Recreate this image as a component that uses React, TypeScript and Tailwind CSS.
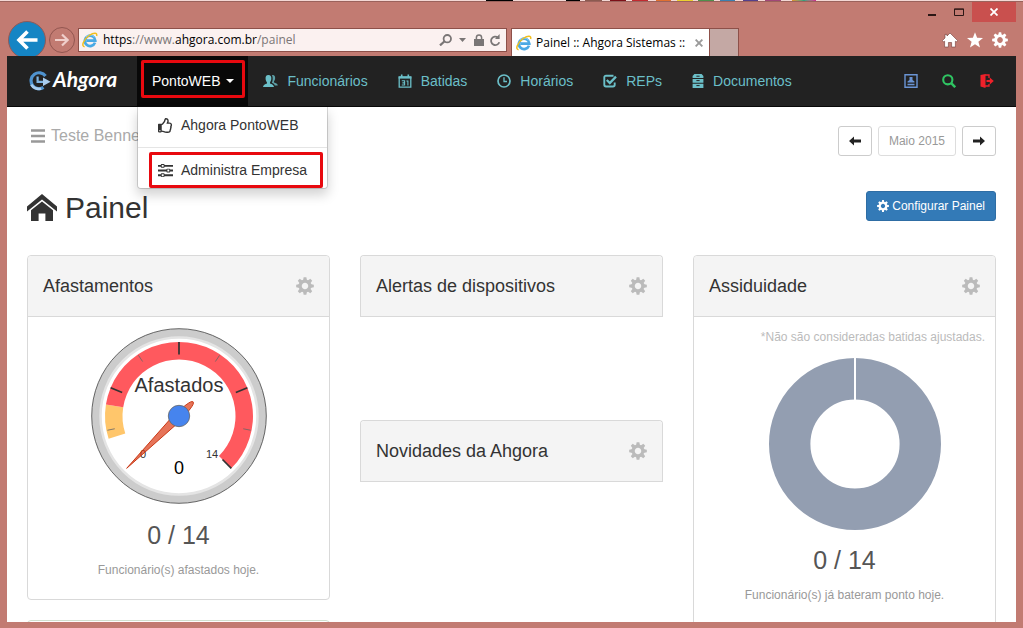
import React from 'react';
import { ImEqualizer } from 'react-icons/im';
import { FaRegThumbsUp } from 'react-icons/fa';

function Cog({ className }: { className: string }) {
  return (
    <svg viewBox="-10 -10 20 20" className={className} fill="currentColor" aria-hidden="true">
      {[0, 45, 90, 135, 180, 225, 270, 315].map((a) => (
        <path key={a} d="M-2.2 -6 L-1.5 -9.8 H1.5 L2.2 -6Z" transform={`rotate(${a})`} />
      ))}
      <circle r="5.4" fill="none" stroke="currentColor" strokeWidth="3.6" />
    </svg>
  );
}

function ExplorerLogo() {
  return (
    <svg viewBox="0 0 16 16" className="size-4 shrink-0" fill="none" aria-hidden="true">
      <path d="M13 10.6 A5.2 5.2 0 1 1 13.3 8.6 H4.5" stroke="#4aa9e4" strokeWidth="2.7" />
      <path d="M12.4 5 A5.4 5.4 0 0 0 4 5" stroke="#8fd3f7" strokeWidth=".9" />
      <path d="M2.6 14.8 C-1.2 14.4 1.6 7.4 7.2 3.5 C11.6 .5 15.6 .2 14.6 4" stroke="#f2bf1d" strokeWidth="1.5" />
    </svg>
  );
}

function AhgoraMark() {
  return (
    <svg viewBox="0 0 24 20" className="h-5 w-6" fill="none" aria-hidden="true">
      <path d="M18.5 5 A8 8 0 1 0 16.5 16.4" stroke="#4f93cf" strokeWidth="3.2" />
      <path d="M4.3 13.6 A8 8 0 0 0 14 17.4" stroke="#a9cdee" strokeWidth="2.6" />
      <path d="M10.6 5.5 V10.8 H17" stroke="#7fb4e2" strokeWidth="2.2" />
      <path d="M16 6.4 L23.6 10.8 L16 15Z" fill="#a9cdee" />
    </svg>
  );
}

function PeopleIcon() {
  return (
    <svg viewBox="0 0 15 14" className="h-[14px] w-[15px]" fill="currentColor" aria-hidden="true">
      <path d="M9 1.2 C11 .6 12.4 2 12.1 4.6 C12 6 11.4 6.8 11 7.5 V8.6 C12.8 9.3 14.6 9.6 14.8 11.6 H11.8 C11.4 9.9 10.2 9.3 8.8 8.7 C9.8 7 10.2 3.4 9 1.2Z" opacity=".8" />
      <path d="M5.4 1 C7.6 1 8.5 2.6 8.3 5 C8.2 6.6 7.4 7.6 7 8.4 V9.4 C9 10.3 10.8 10.6 11 13 H0 C.2 10.6 2 10.3 4 9.4 V8.4 C3.4 7.6 2.7 6.6 2.6 5 C2.4 2.6 3.2 1 5.4 1Z" />
    </svg>
  );
}

function CalendarIcon() {
  return (
    <svg viewBox="0 0 14 14" className="size-[14px]" fill="none" stroke="currentColor" aria-hidden="true">
      <path d="M1.2 3 H12.8 V13.2 H1.2Z" strokeWidth="1.3" />
      <path d="M.6 3.6 H13.4" strokeWidth="2" />
      <path d="M3.7 .4 V4 M10.3 .4 V4" strokeWidth="1.6" />
      <path d="M3.8 6.8 H6.6 V11 H3.8 M4.4 8.9 H6.6 M8.4 7 H9.9 V11.5" strokeWidth="1.1" />
    </svg>
  );
}

function ClockIcon() {
  return (
    <svg viewBox="0 0 14 14" className="size-[14px]" fill="none" stroke="currentColor" aria-hidden="true">
      <circle cx="7" cy="7" r="6" strokeWidth="1.7" />
      <path d="M7 3.2 V7.5 H10" strokeWidth="1.3" />
    </svg>
  );
}

function CheckIcon() {
  return (
    <svg viewBox="0 0 14 14" className="size-[14px]" fill="none" stroke="currentColor" aria-hidden="true">
      <path d="M10.5 1.7 H3 A1.7 1.7 0 0 0 1.3 3.4 V10.8 A1.7 1.7 0 0 0 3 12.5 H10 A1.7 1.7 0 0 0 11.7 10.8 V8.6" strokeWidth="1.9" />
      <path d="M3.8 6 L6.8 9 L13 2.6" strokeWidth="2.3" />
    </svg>
  );
}

function DrawerIcon() {
  return (
    <svg viewBox="0 0 12 14" className="h-[14px] w-3" fill="currentColor" aria-hidden="true">
      <path d="M2.4 0 H9.6 L11.4 2 V4 H.6 V2Z" />
      <path d="M.6 4.9 H11.4 V8.8 H.6Z M.6 9.8 H11.4 V14 H.6Z" />
      <path d="M4.4 2.2 H7.6 M4.4 6.6 H7.6 M4.4 11.6 H7.6" fill="none" stroke="#222" strokeWidth="1" />
    </svg>
  );
}

function ArrowIcon({ flip }: { flip?: boolean }) {
  return (
    <svg viewBox="0 0 12 10" className="h-[10px] w-3" fill="currentColor" aria-hidden="true">
      <path d={flip ? 'M12 5 L7 .4 V3.5 H0 V6.5 H7 V9.6Z' : 'M0 5 L5 .4 V3.5 H12 V6.5 H5 V9.6Z'} />
    </svg>
  );
}

const swatches = [
  ['w-[27px] bg-black', 'ml-[479px]'],
  ['w-[14px] bg-black', 'ml-[53px]'],
  ['w-[17px] bg-[#8b5a50]', 'ml-[5px]'],
  ['w-[16px] bg-[#7d1018]', 'ml-[8px]'],
  ['w-[16px] bg-[#c22a30]', 'ml-[6px]'],
  ['w-[15px] bg-[#e07030]', 'ml-[8px]'],
  ['w-[16px] bg-[#ecd030]', 'ml-[6px]'],
  ['w-[16px] bg-[#50904c]', 'ml-[5px]'],
  ['w-[15px] bg-[#3c80b0]', 'ml-[6px]'],
  ['w-[15px] bg-[#55408c]', 'ml-[8px]'],
  ['w-[16px] bg-[#a04878]', 'ml-[7px]'],
  ['w-[24px] bg-linear-to-r from-[#e09020] via-[#20a080] to-[#d01890]', 'ml-[11px]'],
];

function BrowserChrome() {
  return (
    <header className="flex shrink-0 flex-col font-['Open_Sans','Noto_Sans',sans-serif] text-xs">
      <div className="-mx-[7px] flex h-px overflow-hidden bg-[#f3d8d5] px-[7px]">
        {swatches.map(([look, gap]) => (
          <span key={gap + look} className={`h-px shrink-0 ${look} ${gap}`} />
        ))}
      </div>
      <div className="-mx-[7px] h-px bg-[#9b625c]" />
      <div className="flex h-5 justify-end text-[#2b1715]">
        <button aria-label="Minimizar" className="flex w-[27px] items-center justify-center">
          <svg viewBox="0 0 8 10" className="h-[10px] w-2"><path d="M0 8 H8" stroke="currentColor" strokeWidth="2" /></svg>
        </button>
        <button aria-label="Maximizar" className="flex w-[27px] items-center justify-center">
          <svg viewBox="0 0 10 8" className="h-2 w-[10px]"><path d="M.5 1 H9.5 V7.5 H.5Z M0 1.2 H10" fill="none" stroke="currentColor" /></svg>
        </button>
        <button aria-label="Fechar" className="flex w-[44px] items-center justify-center bg-[#c9504e] text-white">
          <svg viewBox="0 0 8 8" className="size-2"><path d="M.5 .5 L7.5 7.5 M7.5 .5 L.5 7.5" stroke="currentColor" strokeWidth="1.8" /></svg>
        </button>
      </div>
      <div className="flex h-[34px] items-center pt-[2px]">
        <button aria-label="Voltar" className="ml-px flex size-[38px] shrink-0 items-center justify-center rounded-full border border-[#8f5a58] bg-[#1585c4] text-white">
          <svg viewBox="0 0 22 20" className="h-5 w-[22px]" fill="none" stroke="currentColor" strokeWidth="3.6"><path d="M2.5 10 H21.5 M11.5 1.5 L3 10 L11.5 18.5" /></svg>
        </button>
        <button aria-label="Avançar" className="ml-[3px] flex size-[26px] shrink-0 items-center justify-center rounded-full border border-[#925650] text-[#f0cfcb]">
          <svg viewBox="0 0 14 14" className="size-[14px]" fill="none" stroke="currentColor" strokeWidth="2.2"><path d="M0 7 H12.5 M7 1.5 L12.6 7 L7 12.5" /></svg>
        </button>
        <div className="ml-[3px] flex h-6 w-[429px] items-center border border-[#8d5049] bg-[#fbf1f0] pl-[3px] text-[#7a7676]">
          <ExplorerLogo />
          <p className="ml-[5px] flex-1 whitespace-nowrap">
            <span className="text-black">https</span>://www.<span className="text-black">ahgora.com.br</span>/painel
          </p>
          <button aria-label="Pesquisar" className="mr-[7px]">
            <svg viewBox="0 0 13 12" className="h-3 w-[13px]" fill="none" stroke="currentColor"><circle cx="8.3" cy="4.7" r="3.7" strokeWidth="1.8" /><path d="M5.6 7.3 L1 11.4" strokeWidth="2.2" /></svg>
          </button>
          <button aria-label="Sugestões" className="mr-2">
            <svg viewBox="0 0 7 4" className="h-1 w-[7px]" fill="currentColor"><path d="M0 0 H7 L3.5 4Z" /></svg>
          </button>
          <svg viewBox="0 0 10 12" className="mr-[6px] h-3 w-[10px]" fill="currentColor" aria-hidden="true"><path d="M0 5 H10 V12 H0Z" /><path d="M2.4 5.5 V3.6 A2.6 2.6 0 0 1 7.6 3.6 V5.5" fill="none" stroke="currentColor" strokeWidth="1.5" /></svg>
          <button aria-label="Atualizar" className="mr-[5px]">
            <svg viewBox="0 0 11 12" className="h-3 w-[11px]" fill="none" stroke="currentColor" strokeWidth="1.8"><path d="M9.3 8.2 A4.2 4.2 0 1 1 8 3.6" /><path d="M9.6 0 V5 H5Z" fill="currentColor" stroke="none" /></svg>
          </button>
        </div>
        <div className="ml-1 flex h-7 w-[199px] items-center self-end border border-b-0 border-[#8d5049] bg-white pl-1 text-black">
          <ExplorerLogo />
          <span className="ml-1 flex-1 whitespace-nowrap">Painel :: Ahgora Sistemas ::</span>
          <button aria-label="Fechar guia" className="mr-[6px] text-[#9a9a9a]">
            <svg viewBox="0 0 8 8" className="size-2"><path d="M.6 .6 L7.4 7.4 M7.4 .6 L.6 7.4" stroke="currentColor" strokeWidth="1.9" /></svg>
          </button>
        </div>
        <button aria-label="Nova guia" className="h-7 w-[29px] self-end border border-b-0 border-l-0 border-[#8d5049] bg-[#c4a8a4]" />
        <div className="mr-2 ml-auto flex items-center gap-[9px] text-white">
          <button aria-label="Início">
            <svg viewBox="0 0 16 16" className="size-4" fill="currentColor"><path d="M8 1 L15.6 8.6 L14.3 10 L13.4 9.2 V15 H9.6 V10.5 H6.4 V15 H2.6 V9.2 L1.7 10 L.4 8.6 L3 6 V2.4 H5 V4Z" stroke="#6f3a35" strokeWidth=".6" /></svg>
          </button>
          <button aria-label="Favoritos">
            <svg viewBox="0 0 16 16" className="size-4" fill="currentColor"><path d="M8 .2 L10.1 5.7 L16 6 L11.4 9.7 L13 15.4 L8 12.2 L3 15.4 L4.6 9.7 L0 6 L5.9 5.7Z" /></svg>
          </button>
          <button aria-label="Ferramentas"><Cog className="size-4" /></button>
        </div>
      </div>
    </header>
  );
}

const links = [
  { label: 'Funcionários', icon: <PeopleIcon /> },
  { label: 'Batidas', icon: <CalendarIcon /> },
  { label: 'Horários', icon: <ClockIcon /> },
  { label: 'REPs', icon: <CheckIcon /> },
  { label: 'Documentos', icon: <DrawerIcon /> },
];

function Navbar() {
  return (
    <nav className="flex h-[51px] shrink-0 items-stretch border-b border-[#080808] bg-[#222] text-sm text-[#6bbfc8]">
      <a href="#inicio" className="flex w-[130px] shrink-0 items-center gap-[2px] pl-5 text-white">
        <AhgoraMark />
        <span className="pb-1 font-['Lato',sans-serif] text-[21px] font-bold italic">Ahgora</span>
      </a>
      <ul className="flex">
        <li className="relative bg-[#080808] pt-1 pr-[3px] pl-1">
          <button aria-expanded="true" className="flex h-[38px] items-center gap-[6px] rounded-xs border-3 border-[#e8090f] px-2 pt-1 text-white">
            PontoWEB
            <svg viewBox="0 0 8 4" className="h-1 w-2" fill="currentColor" aria-hidden="true"><path d="M0 0 H8 L4 4Z" /></svg>
          </button>
          <div className="absolute top-[51px] left-0 z-10 w-[191px] rounded-b border border-t-0 border-black/15 bg-white bg-clip-padding text-[#333] shadow-[0_6px_12px_rgba(0,0,0,0.175)]">
            <a href="#pontoweb" className="flex h-[41px] items-center gap-2 border-b border-[#e5e5e5] pb-1 pl-5">
              <FaRegThumbsUp className="size-[15px]" />
              Ahgora PontoWEB
            </a>
            <a href="#empresa" className="mt-1 mr-1 ml-[11px] flex h-9 items-center gap-2 rounded-xs border-3 border-[#e8090f] pl-[6px] whitespace-nowrap">
              <ImEqualizer className="size-[15px]" />
              Administra Empresa
            </a>
          </div>
        </li>
        {links.map((l) => (
          <li key={l.label} className="flex">
            <a href={`#${l.label}`} className="flex items-center gap-[9px] px-[15px]">
              {l.icon}
              {l.label}
            </a>
          </li>
        ))}
      </ul>
      <div className="mr-[22px] ml-auto flex items-center gap-6">
        <button aria-label="Perfil" className="text-[#6a94d4]">
          <svg viewBox="0 0 14 14" className="size-[14px]" fill="currentColor"><path d="M1 .8 H13 V13.2 H1Z" fill="none" stroke="currentColor" strokeWidth="1.4" /><path d="M5.5 3 H8.5 V6 L10.5 7.5 V8.5 H3.5 V7.5 L5.5 6Z M3.5 9.7 H10.5 V11.2 H3.5Z" /></svg>
        </button>
        <button aria-label="Buscar" className="text-[#2fc462]">
          <svg viewBox="0 0 14 14" className="size-[14px]" fill="none" stroke="currentColor"><circle cx="5.8" cy="5.8" r="4.6" strokeWidth="2.1" /><path d="M9.2 9.2 L13.2 13.2" strokeWidth="2.5" /></svg>
        </button>
        <button aria-label="Sair" className="text-[#f0212a]">
          <svg viewBox="0 0 14 14" className="size-[14px]" fill="currentColor"><path d="M.5 1 L5.5 0 V14 L.5 12.4Z" /><path d="M5 1 H9 V4 M9 10 V12 H5" fill="none" stroke="currentColor" strokeWidth="1.3" /><path d="M6.5 6 H9.8 V3.6 L13.8 7 L9.8 10.4 V8 H6.5Z" /></svg>
        </button>
      </div>
    </nav>
  );
}

function point(r: number, deg: number) {
  const a = (deg * Math.PI) / 180;
  return `${(r * Math.sin(a)).toFixed(2)} ${(-r * Math.cos(a)).toFixed(2)}`;
}

function band(from: number, to: number, outer: number, inner: number) {
  const large = to - from > 180 ? 1 : 0;
  return `M${point(outer, from)} A${outer} ${outer} 0 ${large} 1 ${point(outer, to)} L${point(inner, to)} A${inner} ${inner} 0 ${large} 0 ${point(inner, from)}Z`;
}

function Gauge() {
  return (
    <svg viewBox="-88 -88 176 176" className="size-44" role="img" aria-label="Afastados: 0 de 14">
      <circle r="87.3" fill="#ccc" stroke="#444" strokeWidth=".8" />
      <circle r="78.5" fill="#fff" stroke="#e4e4e4" strokeWidth="2.5" />
      <path d={band(-108, -81, 74, 56.5)} fill="#ffc66b" />
      <path d={band(-81, 135, 74, 56.5)} fill="#ff595e" />
      {[-67.5, 0, 67.5, 135].map((a) => (
        <path key={a} d={`M${point(74, a)} L${point(61.5, a)}`} stroke="#333" strokeWidth="1.7" />
      ))}
      {[-101.25, -33.75, 33.75, 101.25].map((a) => (
        <path key={a} d={`M${point(73, a)} L${point(65.5, a)}`} stroke="#666" strokeWidth=".8" />
      ))}
      <g fontFamily="Liberation Sans, sans-serif" textAnchor="middle" fill="#333">
        <text y="-24.5" fontSize="20">Afastados</text>
        <text x="-36" y="42" fontSize="11">0</text>
        <text x="33" y="42" fontSize="11">14</text>
        <text y="58" fontSize="18" fill="#000">0</text>
      </g>
      <g transform="rotate(-135)">
        <path d="M0 -74 L-4 -9 C-4 4 -3.2 14 -1.8 18 Q0 22 1.8 18 C3.2 14 4 4 4 -9Z" fill="#dc3912" fillOpacity=".7" stroke="#c63310" strokeWidth=".9" />
      </g>
      <circle r="10.7" fill="#4684ee" stroke="#666" strokeWidth=".8" />
    </svg>
  );
}

function Donut() {
  return (
    <svg viewBox="-86 -86 172 172" className="size-[172px]" role="img" aria-label="0 de 14 funcionários">
      <circle r="65.3" fill="none" stroke="#939eb1" strokeWidth="41.4" />
      <path d="M0 -86 V-44" stroke="#fff" strokeWidth="2" />
    </svg>
  );
}

function Card({ title, children }: { title: string; children?: React.ReactNode }) {
  return (
    <section className={children ? 'rounded border border-[#d9d9d9]' : 'rounded-t border border-b-0 border-[#d9d9d9]'}>
      <div className="flex h-[61px] items-center justify-between rounded-t border-b border-[#d9d9d9] bg-[#f4f4f4] px-[15px] text-[#333]">
        <h2 className="text-lg">{title}</h2>
        <button aria-label={`Configurar ${title}`} className="text-[#bbb]"><Cog className="size-[18px]" /></button>
      </div>
      {children}
    </section>
  );
}

function Count({ children }: { children: React.ReactNode }) {
  return (
    <div className="text-center">
      <p className="text-[25px] leading-[30px] text-[#555]">0 / 14</p>
      <p className="mt-[11px] text-xs leading-[18px] text-[#999]">{children}</p>
    </div>
  );
}

export default function App() {
  return (
    <div className="flex h-screen flex-col overflow-hidden bg-[#c27b72] px-[7px] pb-[6px] font-['Liberation_Sans',Arial,sans-serif]">
      <BrowserChrome />
      <div className="relative flex min-h-0 flex-1 flex-col overflow-hidden bg-white">
        <Navbar />
        <main className="shrink-0 px-5 pt-[19px]">
          <div className="flex h-[30px] items-center justify-between">
            <button className="flex items-center gap-[6px] pb-[10px] pl-1 text-base text-[#aaa]">
              <svg viewBox="0 0 14 14" className="size-[14px] text-[#999]" aria-hidden="true"><path d="M0 1.5 H14 M0 7 H14 M0 12.5 H14" stroke="currentColor" strokeWidth="2.4" /></svg>
              Teste Benne
            </button>
            <div className="flex gap-[6px] text-xs text-[#222]">
              <button aria-label="Mês anterior" className="flex h-[30px] w-[34px] items-center justify-center rounded-[3px] border border-[#ccc]"><ArrowIcon /></button>
              <button className="h-[30px] rounded-[3px] border border-[#ddd] px-[10px] text-[#999]">Maio 2015</button>
              <button aria-label="Próximo mês" className="flex h-[30px] w-[34px] items-center justify-center rounded-[3px] border border-[#ccc]"><ArrowIcon flip /></button>
            </div>
          </div>
          <div className="mt-[35px] flex h-[30px] items-center justify-between">
            <h1 className="flex items-center gap-2 pt-1 text-3xl text-[#333]">
              <svg viewBox="0 0 30 28" className="h-7 w-[30px]" fill="currentColor" aria-hidden="true">
                <path d="M15 0 L30 12.4 V17.4 L15 5.4 L0 17.4 V12.4Z" />
                <path d="M15 7.4 L26 16.2 V27 H18.4 V19.4 H11.6 V27 H4 V16.2Z" />
              </svg>
              Painel
            </h1>
            <button className="flex h-[30px] items-center gap-[3px] rounded-[3px] border border-[#2e6da4] bg-[#337ab7] px-[10px] text-xs text-white">
              <Cog className="size-3" />
              Configurar Painel
            </button>
          </div>
          <div className="mt-[34px] grid grid-cols-3 items-start gap-[30px]">
            <div className="flex flex-col gap-5">
              <Card title="Afastamentos">
                <div className="flex flex-col items-center gap-4 pt-[11px] pb-[20px]">
                  <Gauge />
                  <Count>Funcionário(s) afastados hoje.</Count>
                </div>
              </Card>
              <div className="h-10 rounded border border-[#cfe0cf]" />
            </div>
            <div className="flex flex-col gap-[103px]">
              <Card title="Alertas de dispositivos" />
              <Card title="Novidades da Ahgora" />
            </div>
            <Card title="Assiduidade">
              <div className="px-[10px] pt-[11px] pb-10">
                <p className="text-right text-xs leading-[18px] text-[#bbb]">*Não são consideradas batidas ajustadas.</p>
                <div className="mt-3 mb-[15px] flex justify-center pl-5"><Donut /></div>
                <Count>Funcionário(s) já bateram ponto hoje.</Count>
              </div>
            </Card>
          </div>
        </main>
      </div>
    </div>
  );
}
